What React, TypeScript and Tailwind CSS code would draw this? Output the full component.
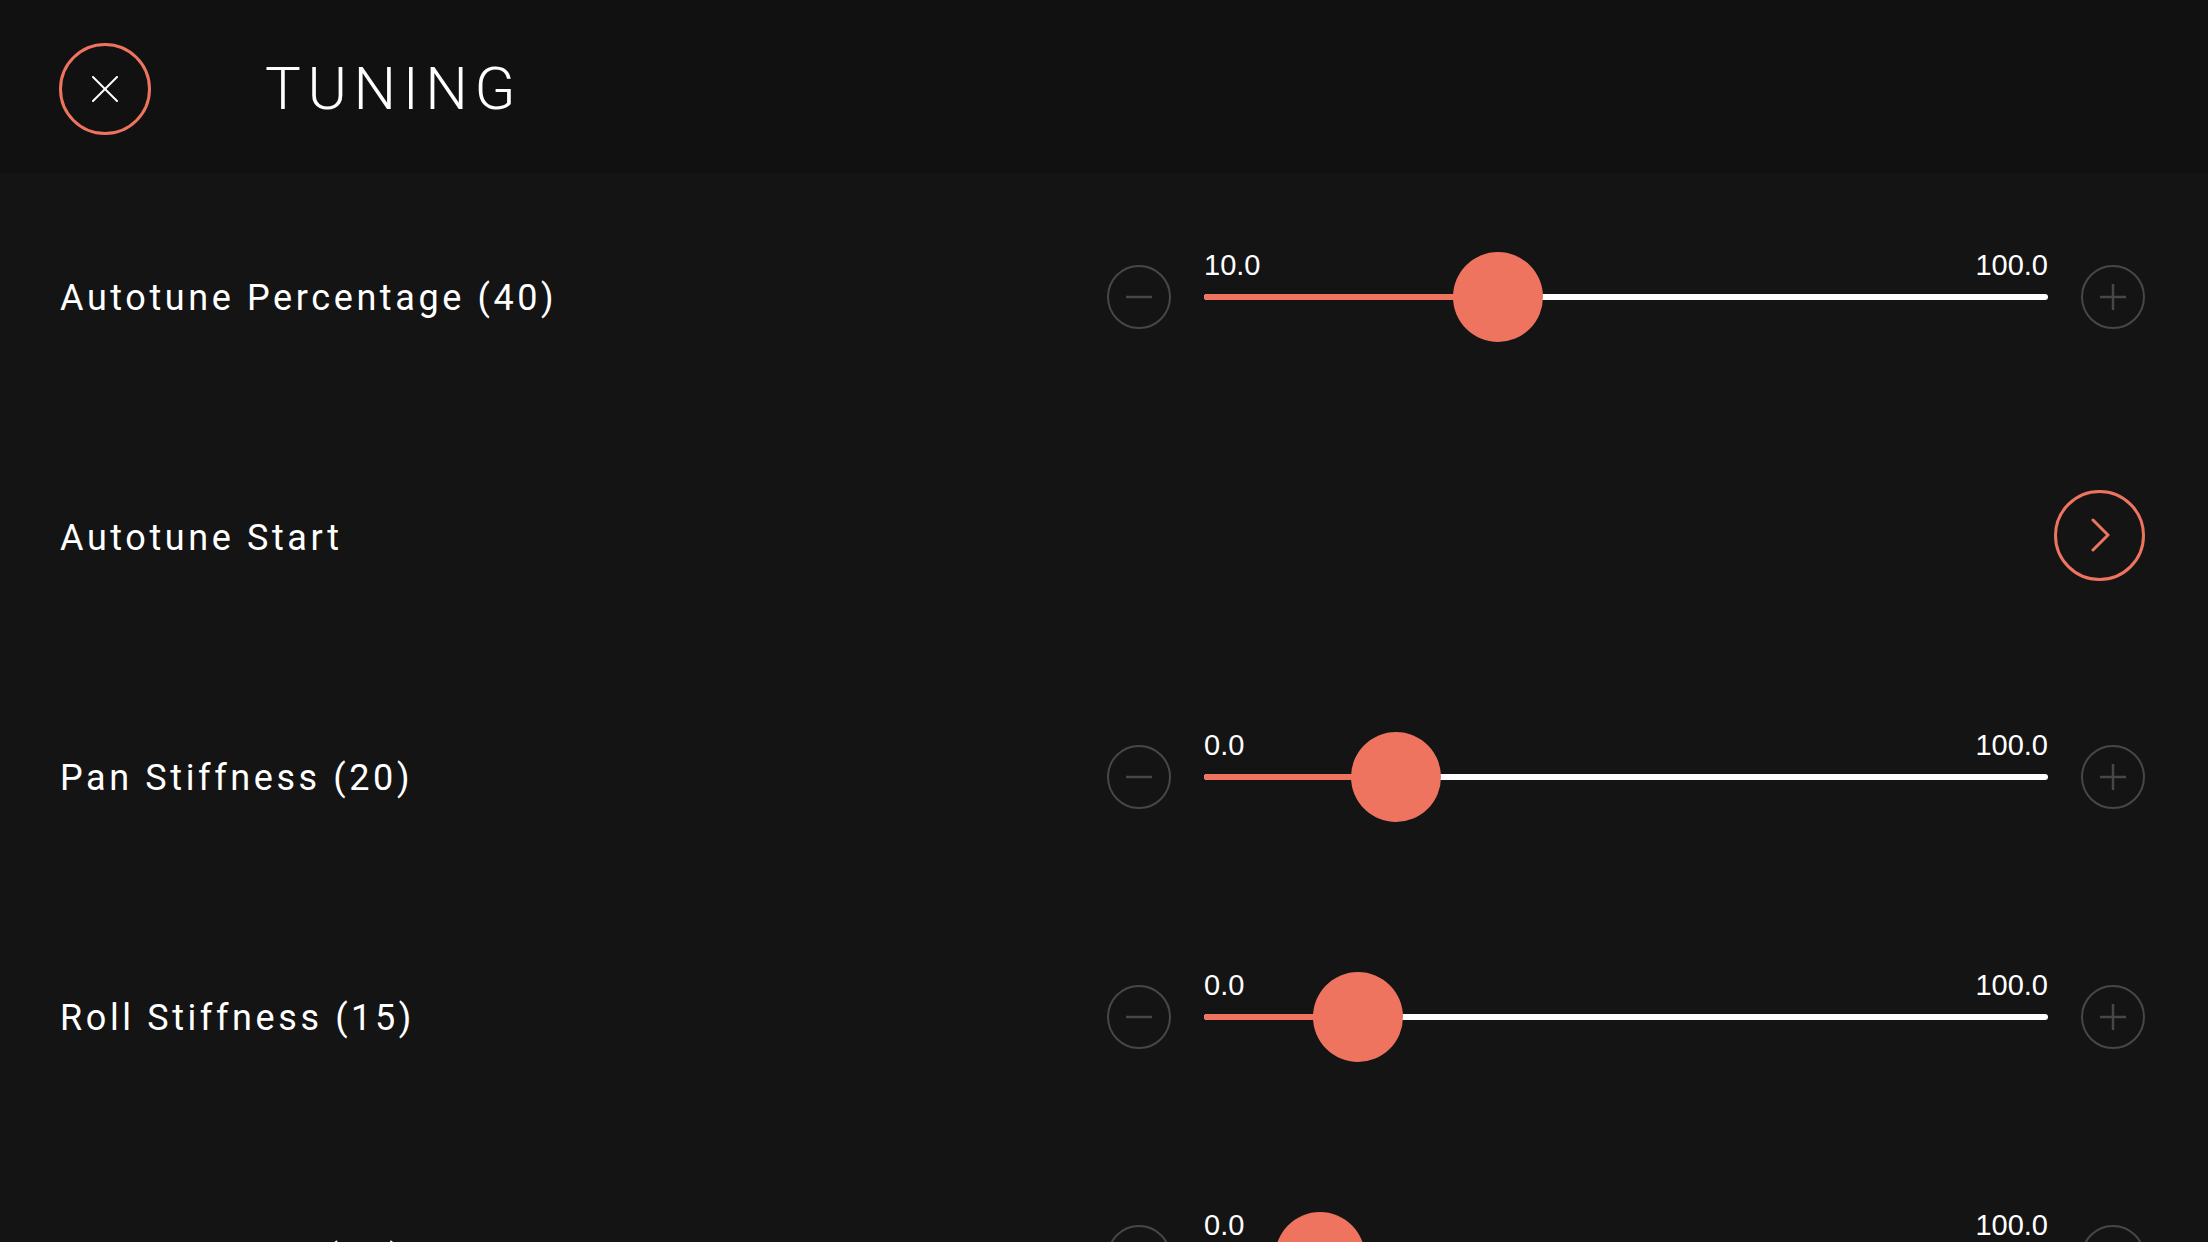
import React from 'react'

const CORAL = '#ee7460'

type Row =
  | { kind: 'slider'; label: string; min: number; max: number; value: number }
  | { kind: 'action'; label: string }

const rows: Row[] = [
  { kind: 'slider', label: 'Autotune Percentage (40)', min: 10, max: 100, value: 40 },
  { kind: 'action', label: 'Autotune Start' },
  { kind: 'slider', label: 'Pan Stiffness (20)', min: 0, max: 100, value: 20 },
  { kind: 'slider', label: 'Roll Stiffness (15)', min: 0, max: 100, value: 15 },
  { kind: 'slider', label: 'Tilt Stiffness (10)', min: 0, max: 100, value: 10 },
]

function StepButton({ plus }: { plus?: boolean }) {
  return (
    <button className="flex h-[64px] w-[64px] shrink-0 items-center justify-center rounded-full border-2 border-[#474747]">
      <svg width="28" height="28" viewBox="0 0 28 28" fill="none" stroke="#474747" strokeWidth="2.5">
        <line x1="1" y1="14" x2="27" y2="14" />
        {plus && <line x1="14" y1="1" x2="14" y2="27" />}
      </svg>
    </button>
  )
}

function Slider({ min, max, value }: { min: number; max: number; value: number }) {
  // thumb travels inside the track, inset 39px on each side
  const frac = (value - min) / (max - min)
  const center = 39 + frac * 766
  return (
    <div className="flex w-[844px] flex-col">
      <div className="flex h-[28px] items-center justify-between text-[29px] font-medium leading-[28px] text-white [font-family:'Liberation_Sans',Arial,sans-serif]">
        <span>{min.toFixed(1)}</span>
        <span>{max.toFixed(1)}</span>
      </div>
      <div className="relative mt-[15px] h-[6px] rounded-full bg-white">
        <div className="absolute left-0 top-0 h-[6px] rounded-full bg-[#ee7460]" style={{ width: center }} />
        <div
          className="absolute top-[-42px] h-[90px] w-[90px] rounded-full bg-[#ee7460]"
          style={{ left: center - 45 }}
        />
      </div>
      <div className="h-[43px]" />
    </div>
  )
}

export default function App() {
  return (
    <div className="h-screen w-full overflow-hidden bg-[#141414] text-white [font-family:Roboto,'Liberation_Sans',sans-serif]">
      {/* Header */}
      <div className="flex h-[173px] items-center bg-[#111111] pl-[59px] pt-[5px]">
        <button
          className="flex h-[92px] w-[92px] items-center justify-center rounded-full border-[3px]"
          style={{ borderColor: CORAL }}
        >
          <svg width="26" height="26" viewBox="0 0 26 26" stroke="white" strokeWidth="2" strokeLinecap="round">
            <line x1="1" y1="1" x2="25" y2="25" />
            <line x1="25" y1="1" x2="1" y2="25" />
          </svg>
        </button>
        <h1 className="ml-[114px] text-[60px] font-light leading-none tracking-[0.11em]">TUNING</h1>
      </div>

      {/* Rows */}
      <div className="pt-[4px]">
        {rows.map((row) => (
          <div key={row.label} className="flex h-[240px] items-center pl-[60px] pr-[63px]">
            <div className="flex-1 pt-[2px] text-[36px] leading-none tracking-[0.1em]">{row.label}</div>
            {row.kind === 'slider' ? (
              <div className="flex items-center gap-[33px]">
                <StepButton />
                <Slider min={row.min} max={row.max} value={row.value} />
                <StepButton plus />
              </div>
            ) : (
              <button className="mb-[4px] flex h-[91px] w-[91px] items-center justify-center rounded-full border-[3px] border-[#ee7460]">
                <svg width="22" height="34" viewBox="0 0 22 34" fill="none" stroke={CORAL} strokeWidth="3" strokeLinecap="round" strokeLinejoin="round">
                  <polyline points="4,2 19,17 4,32" />
                </svg>
              </button>
            )}
          </div>
        ))}
      </div>
    </div>
  )
}
